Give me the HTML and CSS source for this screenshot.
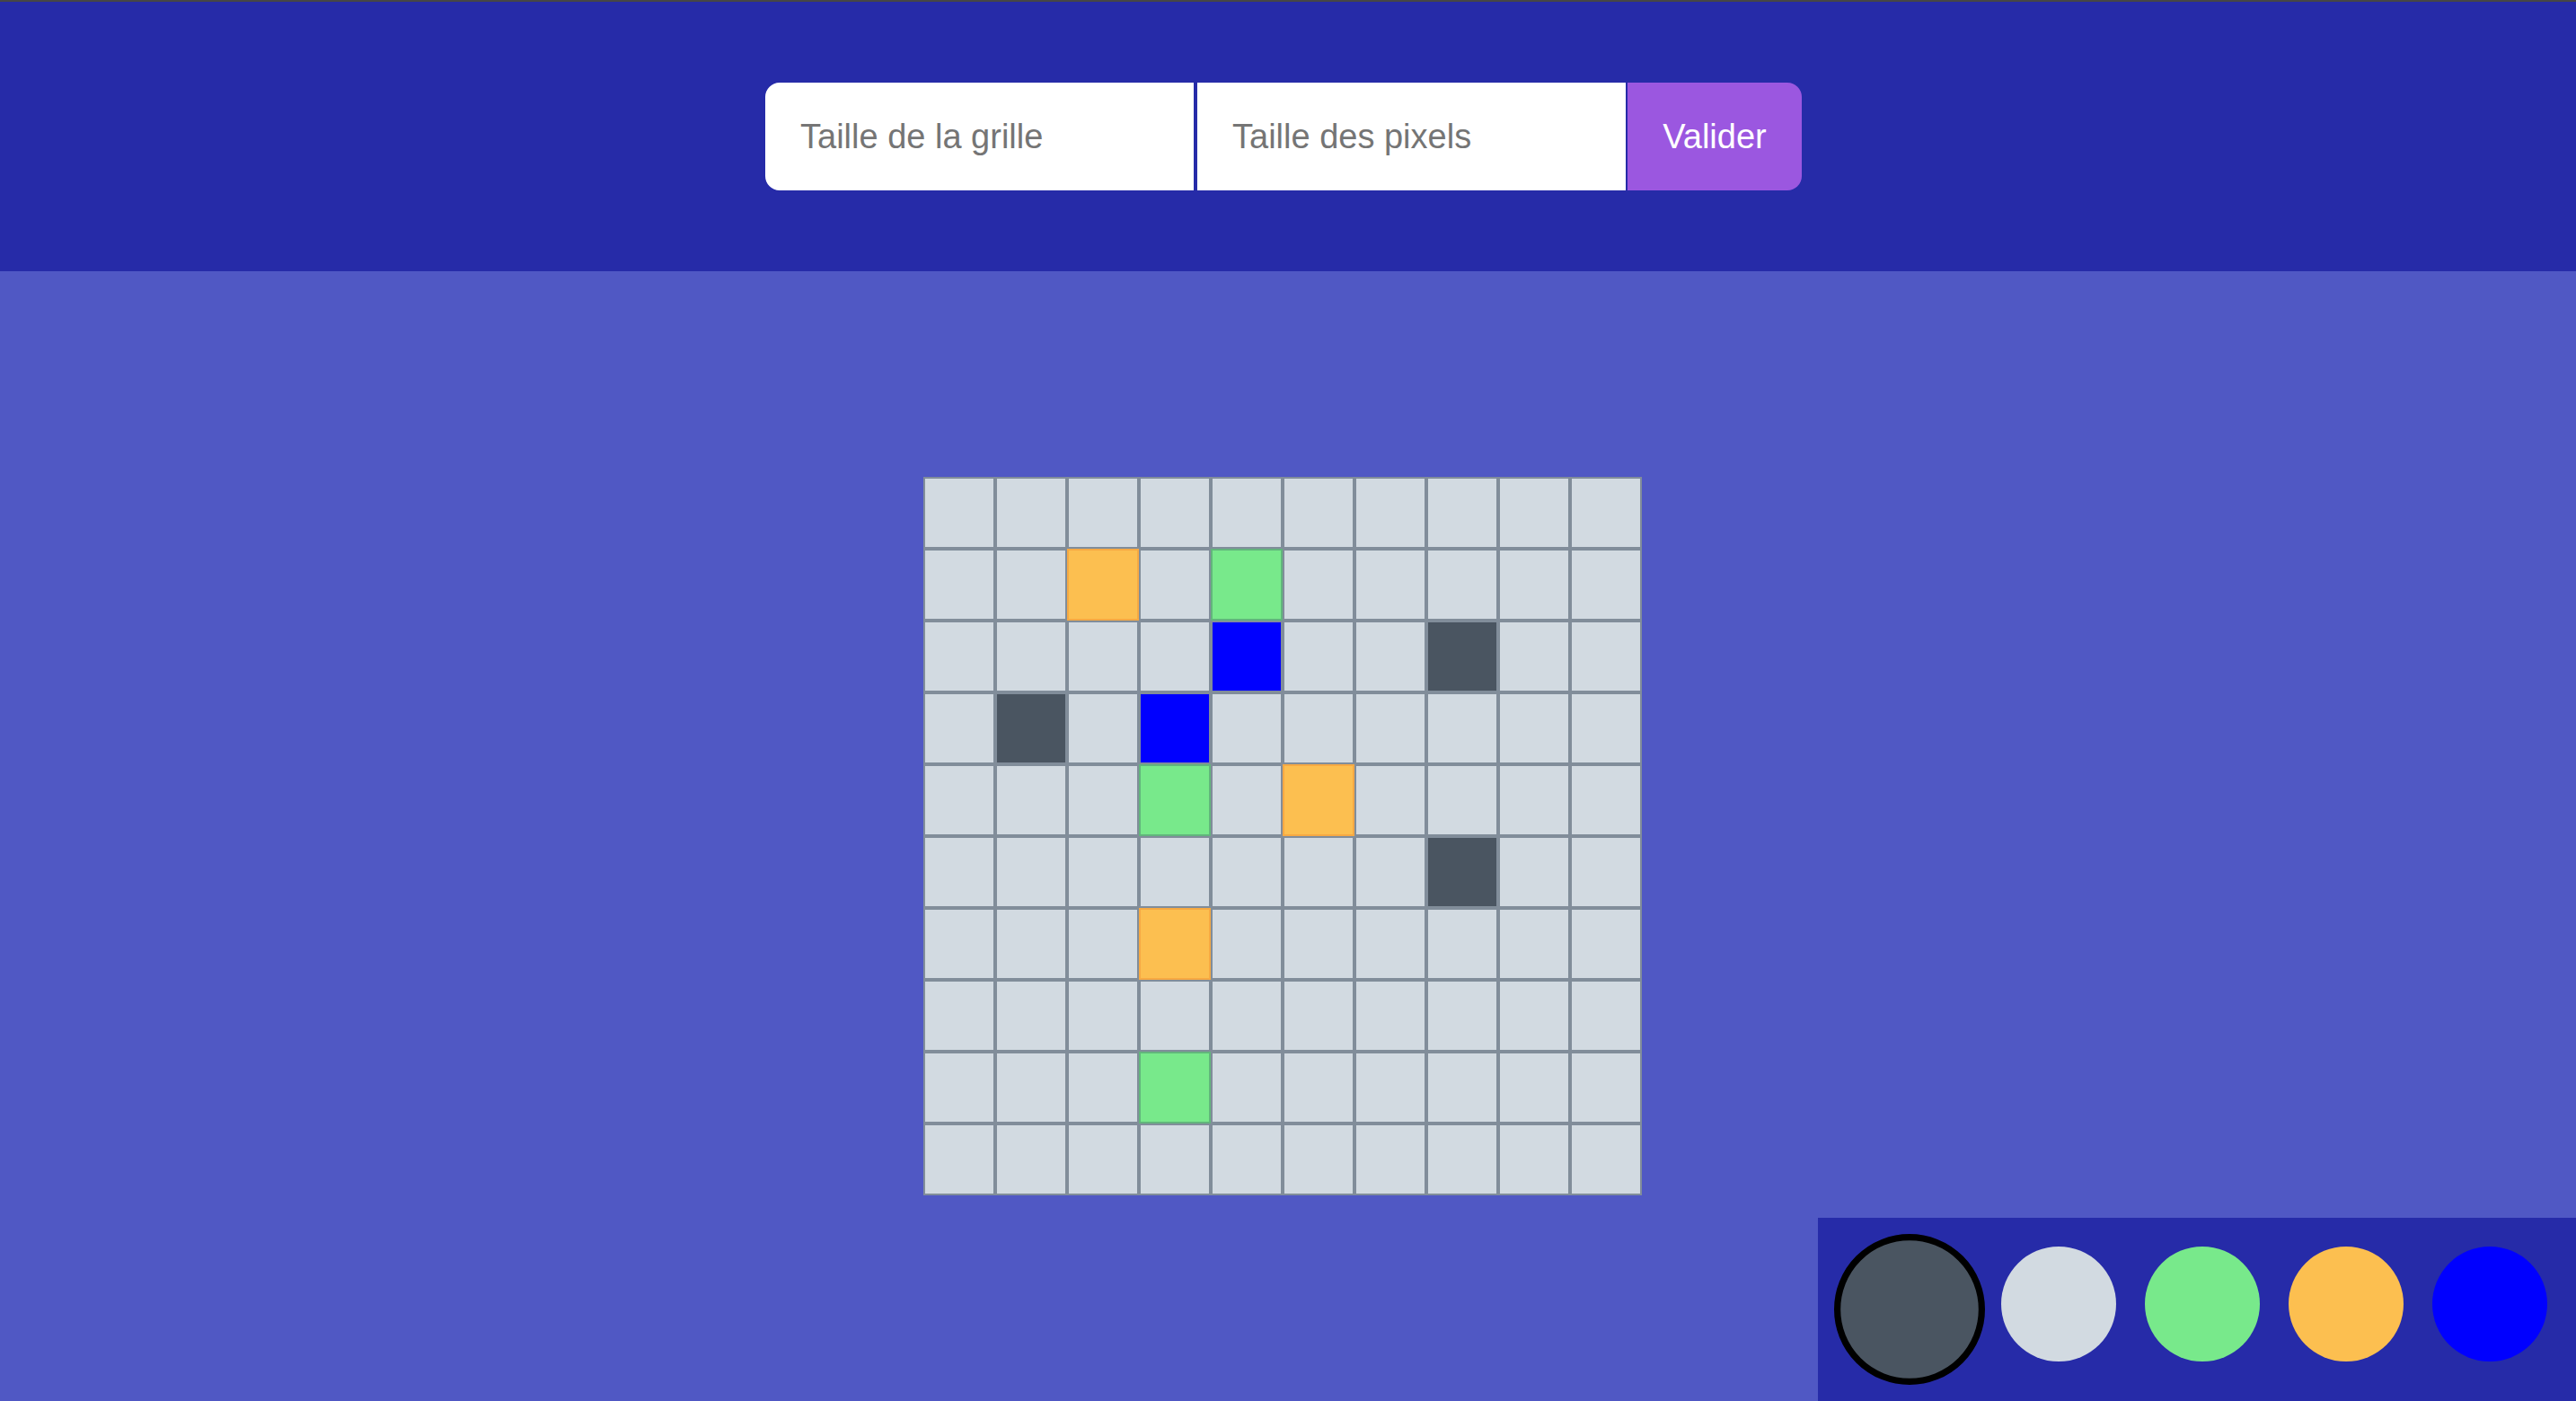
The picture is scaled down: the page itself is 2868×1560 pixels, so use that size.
FILE: index.html
```html
<!DOCTYPE html>
<html lang="fr">
<head>
<meta charset="utf-8">
<title>Pixel Art</title>
<link rel="stylesheet" href="styles.css">
</head>
<body>
<header class="topbar">
  <form class="config">
    <input class="field field-first" type="text" placeholder="Taille de la grille">
    <input class="field" type="text" placeholder="Taille des pixels">
    <button class="submit" type="button">Valider</button>
  </form>
</header>
<main class="stage">
  <div class="board">
    <div class="cell c-l"></div><div class="cell c-l"></div><div class="cell c-l"></div><div class="cell c-l"></div><div class="cell c-l"></div><div class="cell c-l"></div><div class="cell c-l"></div><div class="cell c-l"></div><div class="cell c-l"></div><div class="cell c-l"></div>
    <div class="cell c-l"></div><div class="cell c-l"></div><div class="cell c-o"></div><div class="cell c-l"></div><div class="cell c-g"></div><div class="cell c-l"></div><div class="cell c-l"></div><div class="cell c-l"></div><div class="cell c-l"></div><div class="cell c-l"></div>
    <div class="cell c-l"></div><div class="cell c-l"></div><div class="cell c-l"></div><div class="cell c-l"></div><div class="cell c-b"></div><div class="cell c-l"></div><div class="cell c-l"></div><div class="cell c-d"></div><div class="cell c-l"></div><div class="cell c-l"></div>
    <div class="cell c-l"></div><div class="cell c-d"></div><div class="cell c-l"></div><div class="cell c-b"></div><div class="cell c-l"></div><div class="cell c-l"></div><div class="cell c-l"></div><div class="cell c-l"></div><div class="cell c-l"></div><div class="cell c-l"></div>
    <div class="cell c-l"></div><div class="cell c-l"></div><div class="cell c-l"></div><div class="cell c-g"></div><div class="cell c-l"></div><div class="cell c-o"></div><div class="cell c-l"></div><div class="cell c-l"></div><div class="cell c-l"></div><div class="cell c-l"></div>
    <div class="cell c-l"></div><div class="cell c-l"></div><div class="cell c-l"></div><div class="cell c-l"></div><div class="cell c-l"></div><div class="cell c-l"></div><div class="cell c-l"></div><div class="cell c-d"></div><div class="cell c-l"></div><div class="cell c-l"></div>
    <div class="cell c-l"></div><div class="cell c-l"></div><div class="cell c-l"></div><div class="cell c-o"></div><div class="cell c-l"></div><div class="cell c-l"></div><div class="cell c-l"></div><div class="cell c-l"></div><div class="cell c-l"></div><div class="cell c-l"></div>
    <div class="cell c-l"></div><div class="cell c-l"></div><div class="cell c-l"></div><div class="cell c-l"></div><div class="cell c-l"></div><div class="cell c-l"></div><div class="cell c-l"></div><div class="cell c-l"></div><div class="cell c-l"></div><div class="cell c-l"></div>
    <div class="cell c-l"></div><div class="cell c-l"></div><div class="cell c-l"></div><div class="cell c-g"></div><div class="cell c-l"></div><div class="cell c-l"></div><div class="cell c-l"></div><div class="cell c-l"></div><div class="cell c-l"></div><div class="cell c-l"></div>
    <div class="cell c-l"></div><div class="cell c-l"></div><div class="cell c-l"></div><div class="cell c-l"></div><div class="cell c-l"></div><div class="cell c-l"></div><div class="cell c-l"></div><div class="cell c-l"></div><div class="cell c-l"></div><div class="cell c-l"></div>
  </div>
</main>
<div class="palette">
  <span class="swatch s-d selected"></span>
  <span class="swatch s-l"></span>
  <span class="swatch s-g"></span>
  <span class="swatch s-o"></span>
  <span class="swatch s-b"></span>
</div>
</body>
</html>
```
FILE: styles.css
```css
* {
  box-sizing: border-box;
}

html, body {
  margin: 0;
  padding: 0;
  height: 100%;
}

body {
  font-family: "Liberation Sans", Arial, Helvetica, sans-serif;
  background: #5058c4;
  border-top: 2px solid #464646;
  overflow: hidden;
}

.topbar {
  height: 300px;
  background: #262ba8;
  display: flex;
  align-items: center;
  justify-content: center;
  padding-right: 12px;
}

.config {
  display: flex;
  align-items: center;
}

.field {
  width: 481px;
  height: 124px;
  border: 2px solid #262ba8;
  background: #ffffff;
  padding: 0 0 0 39px;
  font-family: "Liberation Sans", Arial, Helvetica, sans-serif;
  font-size: 38px;
  color: #333333;
  outline: none;
  margin: 0;
}

.field::placeholder {
  color: #757575;
  opacity: 1;
}

.field-first {
  border-radius: 18px 0 0 18px;
}

.submit {
  width: 194px;
  height: 120px;
  border: none;
  margin: 0;
  background: #9b57e0;
  color: #ffffff;
  font-family: "Liberation Sans", Arial, Helvetica, sans-serif;
  font-size: 38px;
  border-radius: 0 16px 16px 0;
  padding: 0;
}

.stage {
  height: calc(100% - 300px);
  display: flex;
  align-items: center;
  justify-content: center;
  padding-right: 12px;
}

.board {
  display: grid;
  grid-template-columns: repeat(10, 80px);
  grid-auto-rows: 80px;
}

.cell {
  border: 2px solid #818d9a;
}

.c-l { background: #d2dae1; }
.c-d { background: #4a5561; }
.c-b { background: #0000ff; }
.c-g { background: #78e98b; border-color: #62b57c; }
.c-o { background: #fcbf50; border-color: #f6a943; }

.palette {
  position: fixed;
  right: 0;
  bottom: 0;
  display: flex;
  align-items: flex-start;
  gap: 32px;
  padding: 32px;
  background: #262ba8;
}

.swatch {
  display: block;
  width: 128px;
  height: 128px;
  border-radius: 50%;
}

.selected {
  width: 140px;
  height: 140px;
  border: 6px solid #000000;
  transform: scale(1.2);
}

.s-d { background: #4a5561; }
.s-l { background: #d2dae1; }
.s-g { background: #78e98b; }
.s-o { background: #fcbf50; }
.s-b { background: #0000ff; }
```
